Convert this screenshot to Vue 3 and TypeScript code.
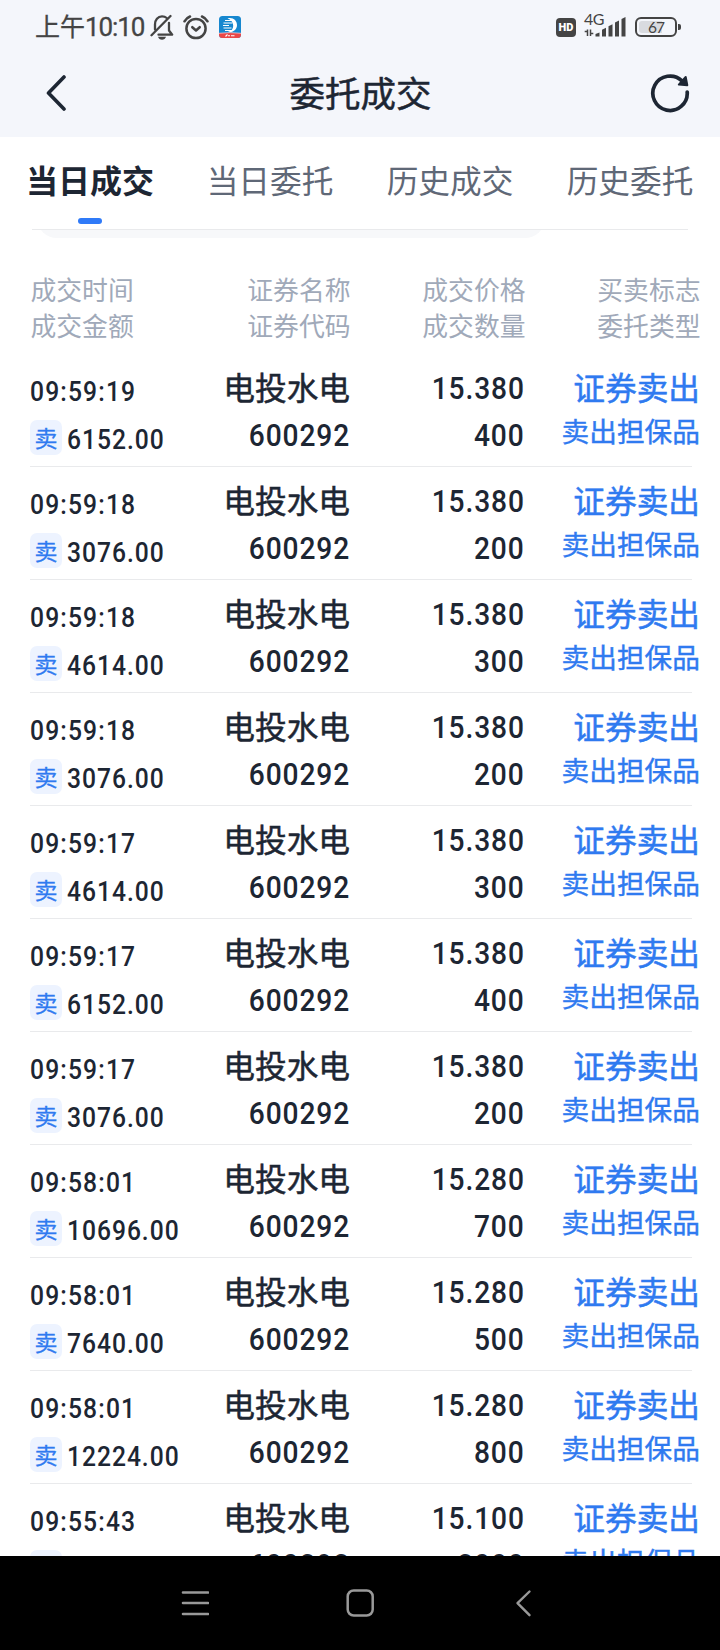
<script setup lang="ts">
interface Deal {
  time: string
  amount: string
  price: string
  qty: string
}

const tabs: string[] = ['当日成交', '当日委托', '历史成交', '历史委托']

const heads: [string, string][] = [
  ['成交时间', '成交金额'],
  ['证券名称', '证券代码'],
  ['成交价格', '成交数量'],
  ['买卖标志', '委托类型'],
]

const deals: Deal[] = [
  { time: '09:59:19', amount: '6152.00', price: '15.380', qty: '400' },
  { time: '09:59:18', amount: '3076.00', price: '15.380', qty: '200' },
  { time: '09:59:18', amount: '4614.00', price: '15.380', qty: '300' },
  { time: '09:59:18', amount: '3076.00', price: '15.380', qty: '200' },
  { time: '09:59:17', amount: '4614.00', price: '15.380', qty: '300' },
  { time: '09:59:17', amount: '6152.00', price: '15.380', qty: '400' },
  { time: '09:59:17', amount: '3076.00', price: '15.380', qty: '200' },
  { time: '09:58:01', amount: '10696.00', price: '15.280', qty: '700' },
  { time: '09:58:01', amount: '7640.00', price: '15.280', qty: '500' },
  { time: '09:58:01', amount: '12224.00', price: '15.280', qty: '800' },
  { time: '09:55:43', amount: '30200.00', price: '15.100', qty: '2000' },
]
</script>

<template>
  <div class="screen">
    <header class="top">
      <div class="status">
        <div class="status-left">
          <span class="clock"><span class="ampm">上午</span>10:10</span>
          <svg class="bell" viewBox="0 0 24 26" width="24" height="26">
            <g fill="none" stroke="#444" stroke-width="2.3" stroke-linecap="round" stroke-linejoin="round">
              <path d="M5 15.500V10.300C5 6 7.800 2.300 12 2.300c2 0 3.500.6 4.700 1.700M19 8.800V16.500l3.200 4.200H8.500" />
              <path d="M20.500 2L1.500 21.200" />
            </g>
            <path d="M8 22.800h8c-.6 1.800-2.100 2.900-4 2.900s-3.400-1.100-4-2.900z" fill="#444" />
          </svg>
          <svg class="alarm" viewBox="0 0 26 25" width="26" height="25">
            <g fill="none" stroke="#444" stroke-linecap="round" stroke-linejoin="round">
              <circle cx="13" cy="13.500" r="9.600" stroke-width="2.500" />
              <path d="M9.300 12.200l3.700 3.300 3.700-3.300" stroke-width="2.500" />
              <path d="M1.500 6.300Q3.300 3 7 1.500M24.500 6.300Q22.700 3 19 1.500" stroke-width="2.500" />
            </g>
          </svg>
          <svg class="app" viewBox="0 0 22 22" width="22" height="22">
            <defs>
              <clipPath id="appClip"><rect width="22" height="22" rx="3.500" /></clipPath>
            </defs>
            <g clip-path="url(#appClip)">
              <rect width="22" height="22" fill="#1687cf" />
              <rect y="17" width="22" height="5" fill="#ea4747" />
              <path d="M0 17.300Q11 15.800 22 17.300" stroke="#f3c9d4" stroke-width=".8" fill="none" />
              <path d="M8.500 2.300C14 .8 18 4.500 18 9s-4 8-9 6.800c3.600-.6 5.200-3 5.200-6 0-3.500-2.200-6-5.700-7.500z" fill="#fff" />
              <path d="M6 4.500h7M4.500 7h9M4 9.500h6M4.500 12h8M6 14.500h7" stroke="#fff" stroke-width="1.200" />
              <path d="M6.500 20.500l2-2M9 19.700h2M12 19.700h3.500" stroke="#fff" stroke-width="1.100" />
            </g>
          </svg>
        </div>
        <div class="status-right">
          <span class="hd">HD</span>
          <span class="signal">
            <span class="net">4G</span>
            <svg viewBox="0 0 43 20" width="43" height="20">
              <path
                d="M3.500 12.500v6.500M.7 14.500h2.800M6.500 12.500v6.500M6.500 16.500h2.800"
                stroke="#444"
                stroke-width="1.500"
              />
              <path
                d="M11.500 17l4-1.500v4h-4zM18 12.800l4-2v8.700h-4zM24.500 9.200l4-2v12.300h-4zM31 5.500l4-2v16h-4zM37.500 2l4-2v19.500h-4z"
                fill="#444"
              />
            </svg>
          </span>
          <span class="battery"><span class="level">67</span></span>
        </div>
      </div>
      <nav class="bar">
        <svg viewBox="0 0 20 38" width="20" height="38">
          <path d="M18 3L2.500 19l15.500 16" fill="none" stroke="#1d2633" stroke-width="3.600" stroke-linecap="round" stroke-linejoin="round" />
        </svg>
        <h1>委托成交</h1>
        <svg viewBox="0 0 40 40" width="40" height="40">
          <path d="M37.200 19A17.200 17.200 0 1 1 32 7.900" fill="none" stroke="#1d2633" stroke-width="3.700" stroke-linecap="round" />
          <path d="M35.700 4L37.300 12.200L28.800 11.600z" fill="#1d2633" stroke="#1d2633" stroke-width="2" stroke-linejoin="round" />
        </svg>
      </nav>
    </header>

    <div class="tabs">
      <div v-for="(tab, i) in tabs" :key="tab" class="tab" :class="{ active: i === 0 }">{{ tab }}</div>
    </div>
    <div class="edge"><div class="card-foot"></div></div>

    <main class="list">
      <div class="grid heads">
        <div v-for="pair in heads" :key="pair[0]" class="head">
          <span>{{ pair[0] }}</span>
          <span>{{ pair[1] }}</span>
        </div>
      </div>
      <div v-for="(deal, i) in deals" :key="i" class="row">
        <div class="grid">
          <div class="when">
            <span class="num">{{ deal.time }}</span>
            <span class="money"><span class="badge">卖</span><span class="num">{{ deal.amount }}</span></span>
          </div>
          <div class="cell">
            <span class="name">电投水电</span>
            <span class="num big">600292</span>
          </div>
          <div class="cell">
            <span class="num big price">{{ deal.price }}</span>
            <span class="num big">{{ deal.qty }}</span>
          </div>
          <div class="cell sell">
            <span class="name">证券卖出</span>
            <span class="kind">卖出担保品</span>
          </div>
        </div>
      </div>
    </main>

    <footer class="keys">
      <svg viewBox="0 0 28 28" width="28" height="28">
        <path d="M2 3.500h25M2 14h25M2 25h25" stroke="#999" stroke-width="2.600" stroke-linecap="round" />
      </svg>
      <svg viewBox="0 0 28 28" width="28" height="28">
        <rect x="1.700" y="1.500" width="25" height="25" rx="6" fill="none" stroke="#999" stroke-width="2.500" />
      </svg>
      <svg viewBox="0 0 28 28" width="28" height="28">
        <path d="M18.500 2.500L6.500 14.200l12 12" fill="none" stroke="#999" stroke-width="2.400" stroke-linecap="round" stroke-linejoin="round" />
      </svg>
    </footer>
  </div>
</template>

<style>
body {
  margin: 0;
  background: #fff;
}
</style>

<style scoped>
.screen {
  width: 720px;
  height: 1650px;
  display: flex;
  flex-direction: column;
  overflow: hidden;
  background: #fff;
  color: #1d2633;
  font-family: "Noto Sans CJK SC", "Noto Sans", sans-serif;
}
.top {
  height: 137px;
  flex: none;
  background: #f4f6fb;
}
.status {
  height: 54px;
  display: flex;
  justify-content: space-between;
  padding: 0 43px 0 35px;
  color: #444;
}
.status-left,
.status-right {
  display: flex;
  align-items: center;
}
.clock {
  width: 115px;
  font: 26px/36px Roboto, "Noto Sans CJK SC", sans-serif;
  letter-spacing: -1.1px;
  white-space: nowrap;
  -webkit-text-stroke: 0.3px currentColor;
}
.ampm {
  font-size: 25px;
  letter-spacing: 0;
}
.bell {
  margin-right: 9px;
}
.alarm {
  margin-right: 10px;
}
.hd {
  width: 20px;
  height: 19px;
  margin-right: 8px;
  border-radius: 4px;
  background: #444;
  color: #fff;
  font: 900 11px/19px Roboto, sans-serif;
  text-align: center;
}
.signal {
  position: relative;
  width: 43px;
  height: 20px;
  margin-right: 8px;
}
.signal svg {
  display: block;
}
.net {
  position: absolute;
  left: 0;
  top: -6px;
  font: 16px/16px Lato, sans-serif;
  letter-spacing: -0.5px;
}
.battery {
  position: relative;
  box-sizing: border-box;
  width: 42px;
  height: 20px;
  padding: 2px;
  border: 2px solid #444;
  border-radius: 6px;
}
.battery::after {
  content: "";
  position: absolute;
  right: -6px;
  top: 5px;
  width: 3px;
  height: 6px;
  border-radius: 0 2px 2px 0;
  background: #444;
}
.level {
  display: block;
  height: 12px;
  border-radius: 3px;
  background: linear-gradient(90deg, #d9dbe0 67%, transparent 67%);
  font: 15.5px/12px Lato, sans-serif;
  letter-spacing: -1px;
  text-align: center;
}
.bar {
  height: 78px;
  display: flex;
  align-items: center;
  justify-content: space-between;
  padding: 0 30px 0 46px;
}
.bar h1 {
  margin: -2px 0 0 5px;
  font-size: 35.5px;
  font-weight: 400;
  line-height: 52px;
  -webkit-text-stroke: 0.5px currentColor;
}
.tabs {
  height: 92px;
  flex: none;
  display: grid;
  grid-template-columns: repeat(4, 1fr);
}
.tab {
  position: relative;
  padding-top: 19px;
  font-size: 31.7px;
  line-height: 46px;
  text-align: center;
  color: #5f6877;
}
.tab.active {
  font-size: 32px;
  font-weight: 700;
  color: #1d2633;
}
.tab.active::after {
  content: "";
  position: absolute;
  left: 78px;
  top: 81px;
  width: 24px;
  height: 6px;
  border-radius: 3px;
  background: #2f7af8;
}
.edge {
  height: 8px;
  flex: none;
  margin: 0 32px;
  border-top: 1px solid #e9eaec;
  overflow: hidden;
}
.card-foot {
  width: 508px;
  height: 40px;
  margin: -32px 0 0 5px;
  border-radius: 28px;
  background: #f7f8fa;
}
.list {
  flex: 1;
  min-height: 0;
  overflow: hidden;
}
.grid {
  display: grid;
  grid-template-columns: 180px 140px 175px 175px;
  width: 670px;
}
.heads {
  height: 116px;
  margin-left: 30.5px;
}
.head {
  display: flex;
  flex-direction: column;
  align-items: flex-end;
  padding-top: 33px;
  font-size: 25.8px;
  line-height: 36px;
  color: #a0a9b9;
}
.head:first-child {
  align-items: flex-start;
}
.row {
  box-sizing: border-box;
  width: 662px;
  height: 113px;
  margin-left: 30px;
  border-bottom: 1px solid #e9eaec;
}
.cell {
  display: flex;
  flex-direction: column;
  align-items: flex-end;
  padding-top: 9px;
}
.name {
  font-size: 31.7px;
  line-height: 46px;
  white-space: nowrap;
  -webkit-text-stroke: 0.5px currentColor;
}
.sell {
  color: #2f7af0;
}
.kind {
  font-size: 27.7px;
  line-height: 42px;
  -webkit-text-stroke: 0.4px currentColor;
}
.num {
  font-family: Roboto, sans-serif;
  font-size: 28px;
  font-weight: 500;
  line-height: 36px;
  letter-spacing: 1.3px;
  transform: scaleX(0.88);
  transform-origin: 0 50%;
}
.num.big {
  font-size: 32px;
  line-height: 46px;
  letter-spacing: 1px;
  margin-top: 3px;
  transform-origin: 100% 50%;
}
.num.price {
  margin: 2px 0 1px;
}
.num.price + .num {
  margin-top: 0;
}
.when {
  display: flex;
  flex-direction: column;
  padding-top: 20px;
}
.money {
  display: flex;
  gap: 5px;
  margin-top: 10px;
}
.money .num {
  margin-top: 2px;
  letter-spacing: 1.1px;
}
.badge {
  width: 32px;
  height: 35px;
  border-radius: 7px;
  background: #edf3ff;
  color: #2f7af0;
  font-size: 23px;
  line-height: 34px;
  text-align: center;
  -webkit-text-stroke: 0.3px currentColor;
}
.keys {
  height: 94px;
  flex: none;
  display: flex;
  align-items: center;
  justify-content: center;
  gap: 137px;
  background: #000;
}
</style>
